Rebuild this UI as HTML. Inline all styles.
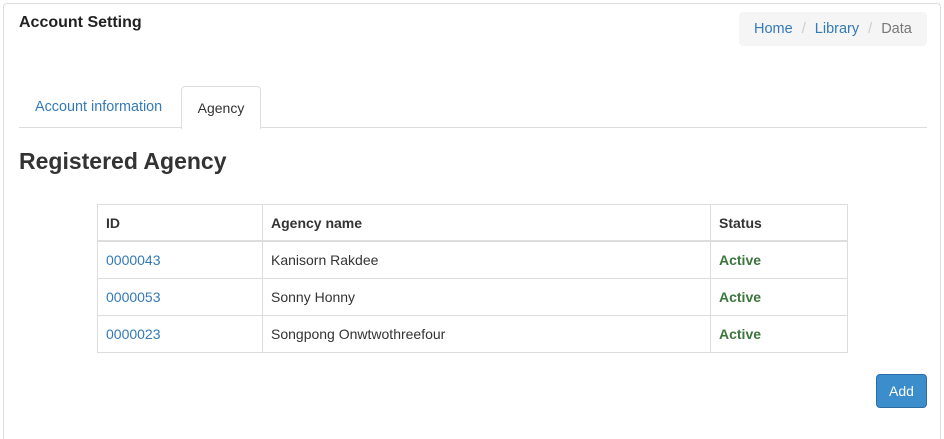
<!DOCTYPE html>
<html><head><style>
html,body{margin:0;width:944px;height:439px;overflow:hidden}
body{background:#fff;font-family:"Liberation Sans",sans-serif;font-size:14px;color:#333;position:relative}
.panel{position:absolute;left:3px;top:3px;width:936px;height:445px;border:1px solid #ddd;border-radius:4px}
.a{position:absolute}
a{color:#337ab7;text-decoration:none}
table{position:absolute;left:97px;top:204px;width:751px;border-collapse:collapse}
td,th{border:1px solid #ddd;height:36px;padding:0 8px;text-align:left;font-size:14px}
th{font-weight:bold;border-bottom:2px solid #ddd;height:35px}
.ok{color:#3c763d;font-weight:bold}
</style></head><body>
<div class="panel"></div>
<div class="a" style="left:19px;top:14px;font-size:16px;font-weight:bold;color:#222">Account Setting</div>
<div class="a" style="left:739px;top:12px;width:188px;height:34px;background:#f5f5f5;border-radius:4px;line-height:34px;text-indent:15px;font-size:14.5px"><a>Home</a> <span style="color:#ccc;padding:0 5px">/</span> <a>Library</a> <span style="color:#ccc;padding:0 5px">/</span> <span style="color:#777">Data</span></div>
<div class="a" style="left:19px;top:127px;width:908px;height:1px;background:#ddd"></div>
<div class="a" style="left:35px;top:99px;font-size:14.4px"><a>Account information</a></div>
<div class="a" style="left:181px;top:86px;width:78px;height:42px;border:1px solid #ddd;border-bottom:none;border-radius:4px 4px 0 0;background:#fff;text-align:center;line-height:42px">Agency</div>
<div class="a" style="left:19px;top:148px;font-size:23px;font-weight:bold;color:#333">Registered Agency</div>
<table>
<tr><th style="width:148px">ID</th><th>Agency name</th><th style="width:120px">Status</th></tr>
<tr><td><a>0000043</a></td><td>Kanisorn Rakdee</td><td class="ok">Active</td></tr>
<tr><td><a>0000053</a></td><td>Sonny Honny</td><td class="ok">Active</td></tr>
<tr><td><a>0000023</a></td><td>Songpong Onwtwothreefour</td><td class="ok">Active</td></tr>
</table>
<div class="a" style="left:876px;top:374px;width:51px;height:34px;background:#3c8dcc;border:1px solid #2e6da4;box-sizing:border-box;border-radius:4px;color:#fff;text-align:center;line-height:32px">Add</div>
</body></html>
